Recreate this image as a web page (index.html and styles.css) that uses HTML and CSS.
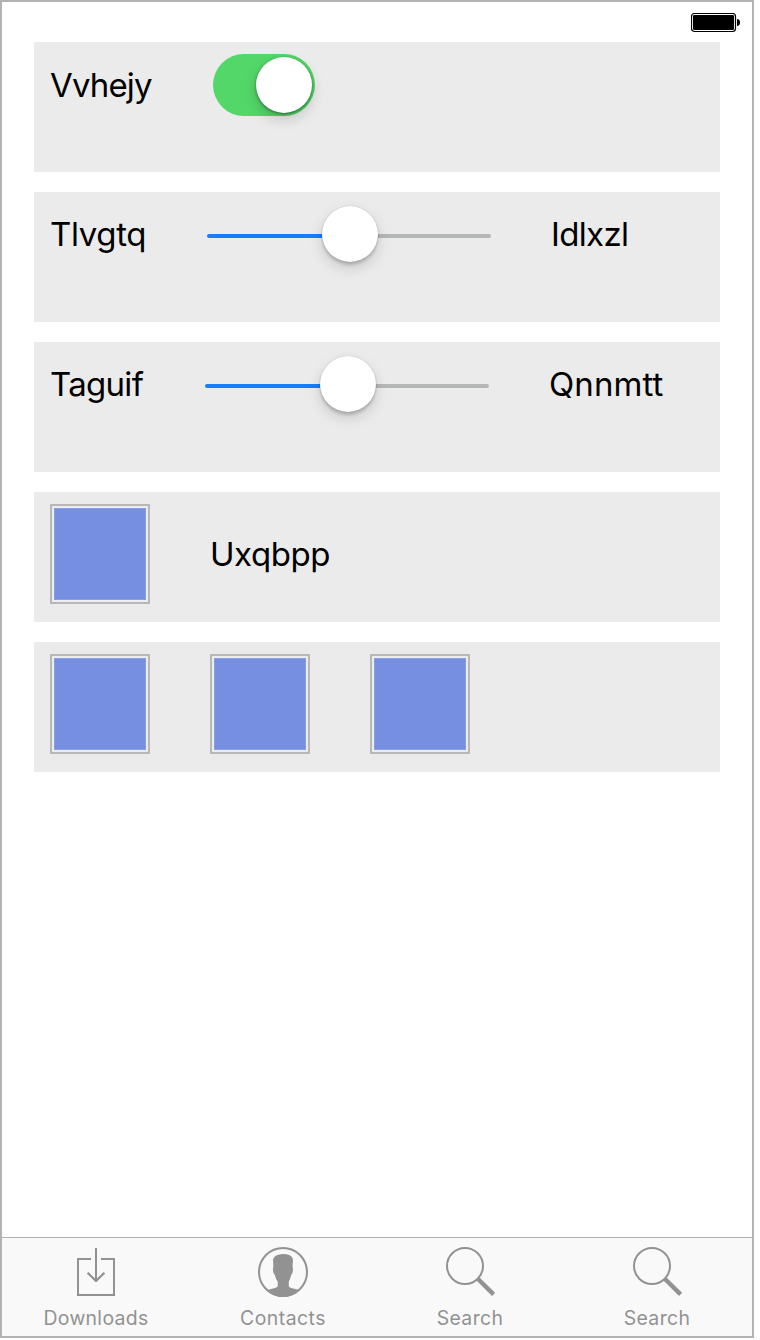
FILE: index.html
```html
<!DOCTYPE html>
<html lang="en">
<head>
<meta charset="utf-8">
<title>Controls</title>
<link rel="stylesheet" href="styles.css">
</head>
<body>
<div class="phone">
  <header class="status">
    <svg class="battery" width="50" height="20" viewBox="0 0 50 20">
      <rect x="0.5" y="0.5" width="44" height="18" rx="3" fill="#fff" stroke="#000" stroke-width="1.2"/>
      <rect x="2" y="2" width="41" height="15" rx="1.2" fill="#000"/>
      <path d="M46 6Q49 6.4 49 9.5T46 13Z" fill="#000"/>
    </svg>
  </header>
  <main class="cards">
    <section class="card">
      <span class="label label-toggle"><span class="t1">Vvhejy</span></span>
      <div class="switch"><div class="knob"></div></div>
    </section>
    <section class="card">
      <span class="label label-first"><span class="t2">Tlvgtq</span></span>
      <div class="slider"><div class="track fill"></div><div class="knob"></div><div class="track rest"></div></div>
      <span class="label label-value"><span class="t3">Idlxzl</span></span>
    </section>
    <section class="card">
      <span class="label label-second"><span class="t4">Taguif</span></span>
      <div class="slider"><div class="track fill"></div><div class="knob"></div><div class="track rest"></div></div>
      <span class="label label-value"><span class="t5">Qnnmtt</span></span>
    </section>
    <section class="card swatches">
      <div class="swatch"></div>
      <span class="label label-swatch"><span class="t6">Uxqbpp</span></span>
    </section>
    <section class="card swatches">
      <div class="swatch"></div>
      <div class="swatch"></div>
      <div class="swatch"></div>
    </section>
  </main>
  <nav class="tabs">
    <div class="tab">
      <svg class="icon" width="52" height="52" viewBox="0 0 52 52" fill="none" stroke="#929292" stroke-width="2">
        <path d="M21 13H8V49H44V13H31M26 2V35"/>
        <path d="M17.6 26.8L26 35L34.4 26.8" stroke-width="2.3"/>
      </svg>
      <span class="caption c1">Downloads</span>
    </div>
    <div class="tab">
      <svg class="icon" width="52" height="52" viewBox="0 0 52 52">
        <circle cx="26" cy="26" r="24" fill="none" stroke="#929292" stroke-width="2"/>
        <path d="M20.7 35.5L19.1 33L17.7 28.5Q16.1 28 15.9 22.5L16.4 20.5L16 13.5Q17.3 8.4 26 8Q33.5 8.2 35.5 12L36 14.5L35.5 20.5L36 22.5Q36 27.7 34.4 28.5L33 33L31.8 35.5V40.5Q33.3 42.3 38.5 43L42.8 44.2Q36 51 26 51Q16 51 9.5 44.2L14 43Q19 42.2 20.7 40.5Z" fill="#929292"/>
      </svg>
      <span class="caption c2">Contacts</span>
    </div>
    <div class="tab">
      <svg class="icon" width="52" height="52" viewBox="0 0 52 52" fill="none" stroke="#929292">
        <circle cx="21" cy="20" r="18" stroke-width="2"/>
        <path d="M34 33L49.6 48.4" stroke-width="4.4"/>
      </svg>
      <span class="caption c3">Search</span>
    </div>
    <div class="tab">
      <svg class="icon" width="52" height="52" viewBox="0 0 52 52" fill="none" stroke="#929292">
        <circle cx="21" cy="20" r="18" stroke-width="2"/>
        <path d="M34 33L49.6 48.4" stroke-width="4.4"/>
      </svg>
      <span class="caption c3">Search</span>
    </div>
  </nav>
</div>
</body>
</html>
```

FILE: styles.css
```css
* { box-sizing: border-box; }
body { margin: 0; background: #fff; font-family: Inter, "Liberation Sans", sans-serif; color: #000; }
.phone { width: 754px; height: 1338px; border: 2px solid #b2b2b2; display: flex; flex-direction: column; }
.status { height: 40px; flex: none; display: flex; justify-content: flex-end; padding: 11px 11px 0 0; }
.cards { flex: 1; display: flex; flex-direction: column; gap: 20px; padding: 0 32px; }
.card { height: 130px; background: #ebebeb; padding: 12px 16px; display: flex; align-items: flex-start; }
.label { font-size: 33px; line-height: 40px; white-space: nowrap; flex: none; padding-top: 10px; }
.label-toggle { width: 163px; padding-top: 11px; }
.label-first { width: 157px; }
.label-second { width: 155px; }
.label-value { margin-left: 60px; }
.label-swatch { padding-top: 30px; }
.t1 { letter-spacing: -.85px; }
.t2 { letter-spacing: -.35px; }
.t3 { letter-spacing: -.65px; }
.t4 { letter-spacing: -.7px; }
.t5 { letter-spacing: .1px; }
.t6 { letter-spacing: -.45px; }
.switch { width: 102px; height: 62px; border-radius: 31px; background: #53d769; padding: 3px; display: flex; justify-content: flex-end; }
.knob { width: 56px; height: 56px; flex: none; border-radius: 50%; background: #fff; box-shadow: 0 0 1px rgba(0,0,0,.3), 0 3px 3px rgba(0,0,0,.16), 0 6px 14px rgba(0,0,0,.15); position: relative; }
.switch .knob { box-shadow: 0 1px 3px rgba(0,0,0,.45), 0 6px 14px rgba(0,0,0,.18); }
.slider { width: 284px; height: 60px; display: flex; align-items: center; }
.track { height: 4px; margin-top: 4px; }
.fill { flex: 0 0 115px; background: #157efb; border-radius: 2px 0 0 2px; }
.rest { flex: 1; background: #b5b6b6; border-radius: 0 2px 2px 0; }
.swatches { gap: 60px; }
.swatch { width: 100px; height: 100px; flex: none; border: 2px solid #b8b8b8; background: #768fe1; box-shadow: inset 0 0 0 1px #eaeaea, inset 0 0 0 2px #edf0fb, inset 0 0 0 3px #889de5; }
.tabs { height: 99px; flex: none; border-top: 1px solid #b2b2b2; background: #f9f9f9; display: grid; grid-template-columns: repeat(4, 187px); padding-left: .5px; }
.tab { display: flex; flex-direction: column; align-items: center; padding-top: 8px; }
.icon { display: block; flex: none; }
.caption { font-size: 19.4px; line-height: 24px; color: #929292; margin-top: 8px; }
.c1 { letter-spacing: .33px; }
.c2 { letter-spacing: .5px; }
.c3 { letter-spacing: .4px; }
```
